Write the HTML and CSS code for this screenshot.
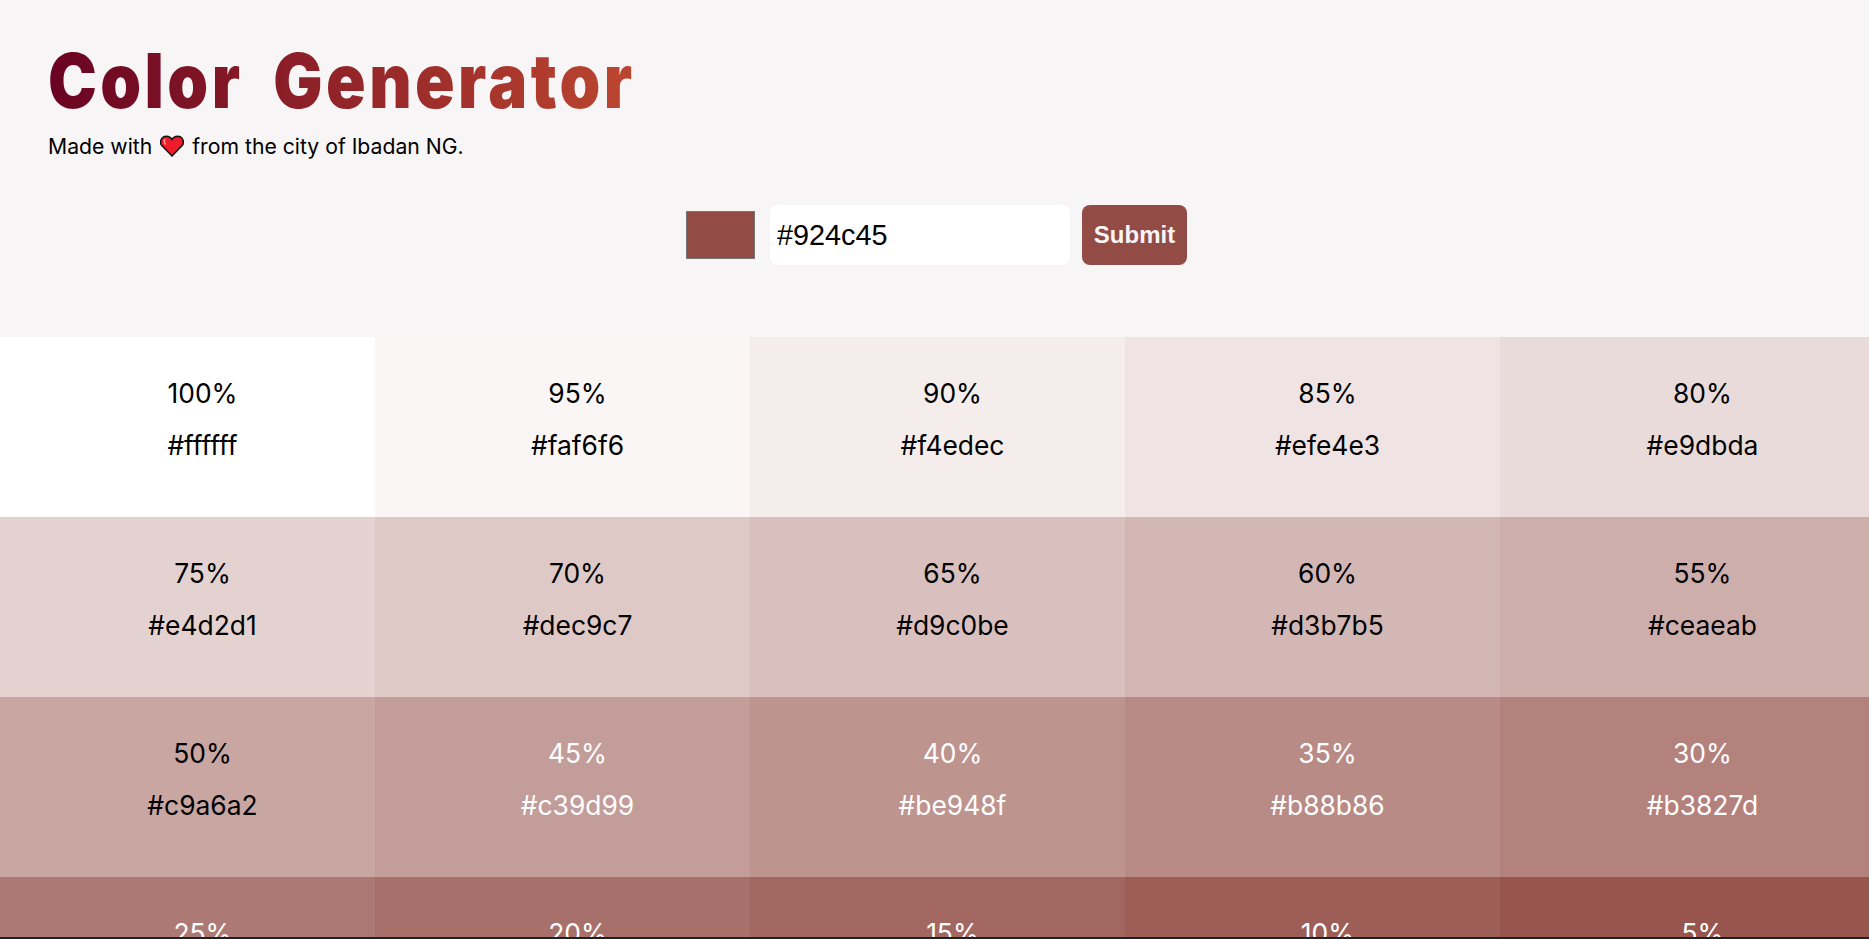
FILE: index.html
```html
<!DOCTYPE html>
<html lang="en">
<head>
<meta charset="utf-8">
<title>Color Generator</title>
<link rel="stylesheet" href="styles.css">
</head>
<body>
<header class="intro">
  <h1 class="title">Color Generator</h1>
  <p class="credit">Made with <svg class="heart" viewBox="0 0 24 22" aria-label="love"><path d="M12 21 1.800 10.500C-.4 8 .6 3.300 3.600 1.800 6.600.4 10.300 1.500 12 4.500 13.700 1.500 17.400.4 20.400 1.800c3 1.500 4 6.200 1.800 8.700z" fill="#ef1c2b" stroke="#111" stroke-width="1.500" stroke-linejoin="miter"/><path d="M5 4.500C4 5.600 4 7.500 5.300 9" fill="none" stroke="#ff9a9a" stroke-width="1.400" stroke-linecap="round"/></svg> from the city of Ibadan NG.</p>
</header>
<form class="picker">
  <span class="swatch"></span>
  <input class="hex" type="text" value="#924c45">
  <button class="submit" type="button">Submit</button>
</form>
<section class="tiles">
  <article class="tile t100"><p>100%</p><p>#ffffff</p></article>
  <article class="tile t95"><p>95%</p><p>#faf6f6</p></article>
  <article class="tile t90"><p>90%</p><p>#f4edec</p></article>
  <article class="tile t85"><p>85%</p><p>#efe4e3</p></article>
  <article class="tile t80"><p>80%</p><p>#e9dbda</p></article>
  <article class="tile t75"><p>75%</p><p>#e4d2d1</p></article>
  <article class="tile t70"><p>70%</p><p>#dec9c7</p></article>
  <article class="tile t65"><p>65%</p><p>#d9c0be</p></article>
  <article class="tile t60"><p>60%</p><p>#d3b7b5</p></article>
  <article class="tile t55"><p>55%</p><p>#ceaeab</p></article>
  <article class="tile t50"><p>50%</p><p>#c9a6a2</p></article>
  <article class="tile t45 light"><p>45%</p><p>#c39d99</p></article>
  <article class="tile t40 light"><p>40%</p><p>#be948f</p></article>
  <article class="tile t35 light"><p>35%</p><p>#b88b86</p></article>
  <article class="tile t30 light"><p>30%</p><p>#b3827d</p></article>
  <article class="tile t25 light"><p>25%</p><p>#ad7974</p></article>
  <article class="tile t20 light"><p>20%</p><p>#a8706a</p></article>
  <article class="tile t15 light"><p>15%</p><p>#a26761</p></article>
  <article class="tile t10 light"><p>10%</p><p>#9d5e58</p></article>
  <article class="tile t5 light"><p>5%</p><p>#97554e</p></article>
</section>
<div class="edge"></div>
</body>
</html>
```
FILE: styles.css
```css
* { box-sizing: border-box; }
html, body { height: 939px; overflow: hidden; }
body {
  margin: 0;
  background: #f7f5f6;
  font-family: Inter, "Liberation Sans", sans-serif;
  color: #000;
}
.intro { padding: 38px 48px 0; height: 205px; }
.title {
  display: block;
  width: max-content;
  margin: 0;
  font-family: Inter, "DejaVu Sans", sans-serif;
  font-size: 76px;
  line-height: 84px;
  font-weight: 900;
  letter-spacing: 4px;
  word-spacing: 15.6px;
  background: linear-gradient(90deg, #690322, #bc4630);
  -webkit-background-clip: text;
  background-clip: text;
  color: transparent;
  transform: scaleX(0.86);
  transform-origin: left center;
}
.credit {
  margin: 12px 0 0;
  font-size: 21.2px;
  line-height: 24px;
  display: flex;
  align-items: center;
  gap: 8px;
}
.heart { width: 24px; height: 22px; }
.picker {
  height: 132px;
  display: flex;
  justify-content: center;
  align-items: flex-start;
  padding-left: 4px;
}
.swatch {
  width: 69px;
  height: 48px;
  margin: 6px 15px 0 0;
  background: #924c45;
  border: 1px solid #767676;
}
.hex {
  width: 300px;
  height: 60px;
  margin-right: 12px;
  padding: 0 7px;
  border: 0;
  border-radius: 8px;
  background: #fff;
  font-family: "Liberation Sans", sans-serif;
  font-size: 28.8px;
  color: #000;
}
.submit {
  width: 105px;
  height: 60px;
  padding: 0;
  border: 0;
  border-radius: 8px;
  background: #924c45;
  color: #f7f5f6;
  font-family: "Liberation Sans", sans-serif;
  font-size: 24px;
  font-weight: 700;
}
.tiles {
  display: grid;
  grid-template-columns: repeat(5, 375px);
  grid-auto-rows: 180px;
}
.tile {
  padding: 37.5px 0 0 30px;
  text-align: center;
  font-size: 26.4px;
  line-height: 36px;
}
.tile p { margin: 0 0 16px; }
.light { color: #fff; }
.t100 { background: #ffffff; }
.t95 { background: #faf6f6; }
.t90 { background: #f4edec; }
.t85 { background: #efe4e3; }
.t80 { background: #e9dbda; }
.t75 { background: #e4d2d1; }
.t70 { background: #dec9c7; }
.t65 { background: #d9c0be; }
.t60 { background: #d3b7b5; }
.t55 { background: #ceaeab; }
.t50 { background: #c9a6a2; }
.t45 { background: #c39d99; }
.t40 { background: #be948f; }
.t35 { background: #b88b86; }
.t30 { background: #b3827d; }
.t25 { background: #ad7974; }
.t20 { background: #a8706a; }
.t15 { background: #a26761; }
.t10 { background: #9d5e58; }
.t5 { background: #97554e; }
.edge {
  position: fixed;
  left: 0;
  right: 0;
  bottom: 0;
  height: 2px;
  background: #1b2224;
}
```
